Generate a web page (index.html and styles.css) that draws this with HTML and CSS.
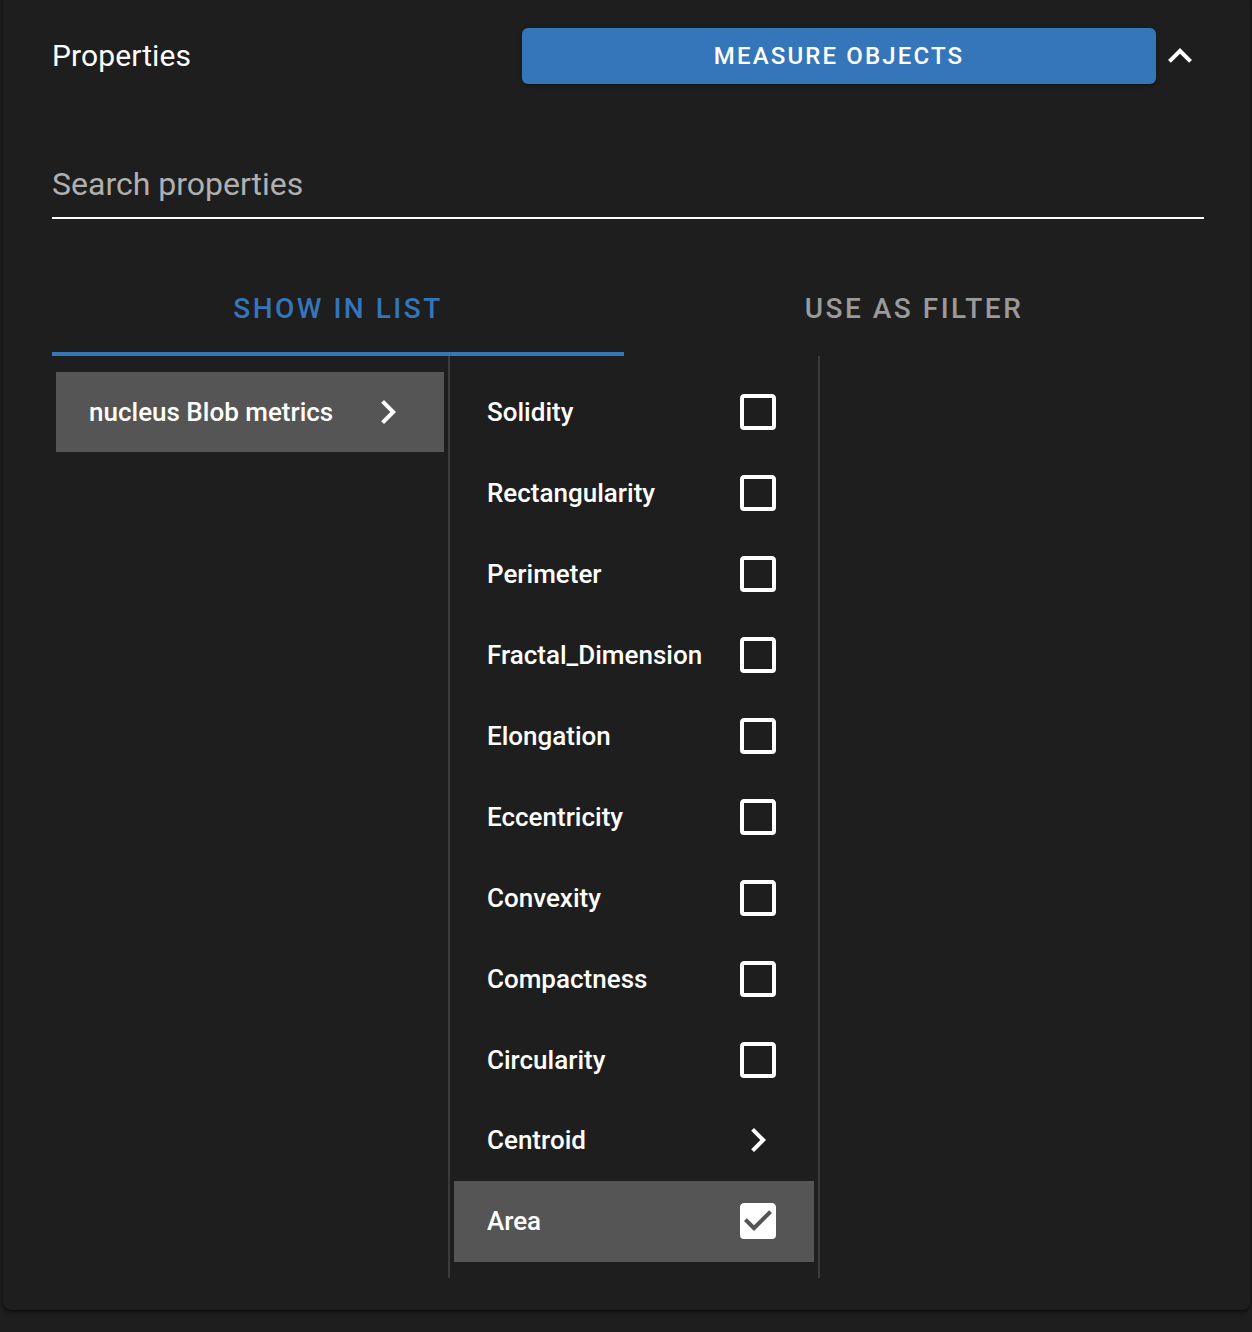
FILE: index.html
```html
<!DOCTYPE html>
<html lang="en">
<head>
<meta charset="utf-8">
<title>Properties</title>
<link rel="stylesheet" href="styles.css">
</head>
<body>
<div class="card">
  <div class="header">
    <h1 class="title">Properties</h1>
    <button class="measure" type="button">Measure objects</button>
    <svg class="icon collapse" viewBox="0 0 24 24"><path d="M7.41,15.41L12,10.83L16.59,15.41L18,14L12,8L6,14L7.41,15.41Z"/></svg>
  </div>

  <div class="search">
    <input class="search-input" type="text" placeholder="Search properties">
  </div>

  <div class="tabs">
    <div class="tab active">Show in list</div>
    <div class="tab">Use as filter</div>
  </div>

  <div class="panes">
    <div class="col groups">
      <div class="row selected">
        <span class="label">nucleus Blob metrics</span>
        <svg class="icon" viewBox="0 0 24 24"><path d="M8.59,16.58L13.17,12L8.59,7.41L10,6L16,12L10,18L8.59,16.58Z"/></svg>
      </div>
    </div>
    <div class="col props">
      <div class="row"><span class="label">Solidity</span><svg class="icon" viewBox="0 0 24 24"><path d="M19,3H5C3.89,3 3,3.89 3,5V19A2,2 0 0,0 5,21H19A2,2 0 0,0 21,19V5C21,3.89 20.1,3 19,3M19,5V19H5V5H19Z"/></svg></div>
      <div class="row"><span class="label">Rectangularity</span><svg class="icon" viewBox="0 0 24 24"><path d="M19,3H5C3.89,3 3,3.89 3,5V19A2,2 0 0,0 5,21H19A2,2 0 0,0 21,19V5C21,3.89 20.1,3 19,3M19,5V19H5V5H19Z"/></svg></div>
      <div class="row"><span class="label">Perimeter</span><svg class="icon" viewBox="0 0 24 24"><path d="M19,3H5C3.89,3 3,3.89 3,5V19A2,2 0 0,0 5,21H19A2,2 0 0,0 21,19V5C21,3.89 20.1,3 19,3M19,5V19H5V5H19Z"/></svg></div>
      <div class="row"><span class="label">Fractal_Dimension</span><svg class="icon" viewBox="0 0 24 24"><path d="M19,3H5C3.89,3 3,3.89 3,5V19A2,2 0 0,0 5,21H19A2,2 0 0,0 21,19V5C21,3.89 20.1,3 19,3M19,5V19H5V5H19Z"/></svg></div>
      <div class="row"><span class="label">Elongation</span><svg class="icon" viewBox="0 0 24 24"><path d="M19,3H5C3.89,3 3,3.89 3,5V19A2,2 0 0,0 5,21H19A2,2 0 0,0 21,19V5C21,3.89 20.1,3 19,3M19,5V19H5V5H19Z"/></svg></div>
      <div class="row"><span class="label">Eccentricity</span><svg class="icon" viewBox="0 0 24 24"><path d="M19,3H5C3.89,3 3,3.89 3,5V19A2,2 0 0,0 5,21H19A2,2 0 0,0 21,19V5C21,3.89 20.1,3 19,3M19,5V19H5V5H19Z"/></svg></div>
      <div class="row"><span class="label">Convexity</span><svg class="icon" viewBox="0 0 24 24"><path d="M19,3H5C3.89,3 3,3.89 3,5V19A2,2 0 0,0 5,21H19A2,2 0 0,0 21,19V5C21,3.89 20.1,3 19,3M19,5V19H5V5H19Z"/></svg></div>
      <div class="row"><span class="label">Compactness</span><svg class="icon" viewBox="0 0 24 24"><path d="M19,3H5C3.89,3 3,3.89 3,5V19A2,2 0 0,0 5,21H19A2,2 0 0,0 21,19V5C21,3.89 20.1,3 19,3M19,5V19H5V5H19Z"/></svg></div>
      <div class="row"><span class="label">Circularity</span><svg class="icon" viewBox="0 0 24 24"><path d="M19,3H5C3.89,3 3,3.89 3,5V19A2,2 0 0,0 5,21H19A2,2 0 0,0 21,19V5C21,3.89 20.1,3 19,3M19,5V19H5V5H19Z"/></svg></div>
      <div class="row"><span class="label">Centroid</span><svg class="icon" viewBox="0 0 24 24"><path d="M8.59,16.58L13.17,12L8.59,7.41L10,6L16,12L10,18L8.59,16.58Z"/></svg></div>
      <div class="row selected"><span class="label">Area</span><svg class="icon" viewBox="0 0 24 24"><path d="M10,17L5,12L6.41,10.58L10,14.17L17.59,6.58L19,8M19,3H5C3.89,3 3,3.89 3,5V19A2,2 0 0,0 5,21H19A2,2 0 0,0 21,19V5C21,3.89 20.1,3 19,3Z"/></svg></div>
    </div>
    <div class="col extra"></div>
  </div>
</div>
</body>
</html>
```

FILE: styles.css
```css
* {
  box-sizing: border-box;
}

html, body {
  margin: 0;
  padding: 0;
  background: #1e1e1e;
}

body {
  font-family: Roboto, "Noto Sans", "Liberation Sans", sans-serif;
  color: #ffffff;
  height: 1332px;
  overflow: hidden;
}

.card {
  margin: -8px 2px 0 3px;
  padding: 36px 46px 32px 49px;
  background: #1e1e1e;
  border-radius: 8px;
  box-shadow: 0 2px 4px rgba(0, 0, 0, 0.45), 0 1px 2px rgba(0, 0, 0, 0.3);
}

/* header */
.header {
  display: flex;
  align-items: center;
  height: 56px;
}

.title {
  flex: 0 0 470px;
  margin: 0;
  font-size: 30px;
  font-weight: 400;
  line-height: 36px;
  letter-spacing: 0.1px;
}

.measure {
  flex: 1;
  height: 56px;
  border: 0;
  border-radius: 6px;
  background: #3575ba;
  color: #ffffff;
  font-family: inherit;
  font-size: 24px;
  font-weight: 500;
  letter-spacing: 0.0892857em;
  text-transform: uppercase;
  box-shadow: 0 3px 1px -2px rgba(0, 0, 0, 0.2), 0 2px 2px 0 rgba(0, 0, 0, 0.14), 0 1px 5px 0 rgba(0, 0, 0, 0.12);
}

.icon {
  width: 48px;
  height: 48px;
  flex: 0 0 48px;
  fill: #ffffff;
}

/* search */
.search {
  margin-top: 80px;
}

.search-input {
  display: block;
  width: 100%;
  height: 55px;
  padding: 0 0 13px;
  border: 0;
  border-bottom: 2px solid #ffffff;
  background: transparent;
  color: #ffffff;
  font-family: inherit;
  font-size: 32px;
  line-height: 40px;
  outline: none;
}

.search-input::placeholder {
  color: #b0b0b0;
  opacity: 1;
}

/* tabs */
.tabs {
  display: grid;
  grid-template-columns: 572px 572px;
  column-gap: 4px;
  margin-top: 41px;
}

.tab {
  height: 96px;
  display: flex;
  align-items: center;
  justify-content: center;
  font-size: 28px;
  font-weight: 500;
  letter-spacing: 0.0892857em;
  text-transform: uppercase;
  color: #9a9a9a;
  border-bottom: 4px solid transparent;
  padding-top: 4px;
}

.tab.active {
  color: #3575ba;
  border-bottom-color: #3575ba;
}

/* panes */
.panes {
  display: flex;
  align-items: stretch;
}

.col {
  padding: 16px 4px;
}

.groups {
  flex: 0 0 398px;
  border-right: 2px solid #3b3b3b;
}

.props {
  flex: 0 0 370px;
  border-right: 2px solid #3b3b3b;
}

.extra {
  flex: 1;
}

.row {
  display: flex;
  align-items: center;
  justify-content: space-between;
  height: 80.9px;
  padding: 0 32px 0 32px;
}

.groups .row {
  height: 80px;
}

.row.selected {
  background: #555555;
}

.label {
  font-size: 26px;
  font-weight: 500;
  line-height: 32px;
  white-space: nowrap;
  padding-left: 1px;
}
```
